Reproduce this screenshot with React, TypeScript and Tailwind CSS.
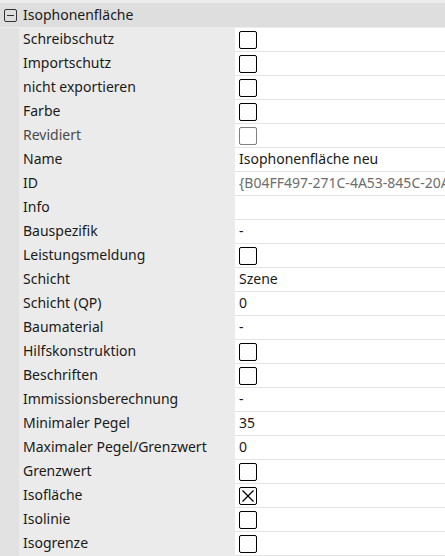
import React from 'react';

type Row = {
  label: string;
  kind: 'check' | 'text';
  value?: string;
  checked?: boolean;
  disabled?: boolean;
  muted?: boolean;
};

const rows: Row[] = [
  { label: 'Schreibschutz', kind: 'check' },
  { label: 'Importschutz', kind: 'check' },
  { label: 'nicht exportieren', kind: 'check' },
  { label: 'Farbe', kind: 'check' },
  { label: 'Revidiert', kind: 'check', disabled: true },
  { label: 'Name', kind: 'text', value: 'Isophonenfläche neu' },
  { label: 'ID', kind: 'text', value: '{B04FF497-271C-4A53-845C-20A1D3C0E9F1}', muted: true },
  { label: 'Info', kind: 'text', value: '' },
  { label: 'Bauspezifik', kind: 'text', value: '-' },
  { label: 'Leistungsmeldung', kind: 'check' },
  { label: 'Schicht', kind: 'text', value: 'Szene' },
  { label: 'Schicht (QP)', kind: 'text', value: '0' },
  { label: 'Baumaterial', kind: 'text', value: '-' },
  { label: 'Hilfskonstruktion', kind: 'check' },
  { label: 'Beschriften', kind: 'check' },
  { label: 'Immissionsberechnung', kind: 'text', value: '-' },
  { label: 'Minimaler Pegel', kind: 'text', value: '35' },
  { label: 'Maximaler Pegel/Grenzwert', kind: 'text', value: '0' },
  { label: 'Grenzwert', kind: 'check' },
  { label: 'Isofläche', kind: 'check', checked: true },
  { label: 'Isolinie', kind: 'check' },
  { label: 'Isogrenze', kind: 'check' },
];

function CheckBox({ checked, disabled }: { checked?: boolean; disabled?: boolean }) {
  return (
    <div
      className={`w-[18px] h-[18px] rounded-[2px] border bg-white flex items-center justify-center ${
        disabled ? 'border-[#808080]' : 'border-[#000]'
      }`}
    >
      {checked && (
        <svg width="14" height="14" viewBox="0 0 14 14">
          <path d="M1.5 1.5 L12.5 12.5 M12.5 1.5 L1.5 12.5" stroke="#000" strokeWidth="1.3" />
        </svg>
      )}
    </div>
  );
}

export default function App() {
  return (
    <div
      className="w-[445px] h-[556px] overflow-hidden bg-[#ececec] text-[14px] text-[#1a1a1a]"
      style={{ fontFamily: '"Noto Sans", "Open Sans", sans-serif' }}
    >
      <div className="h-[3px] bg-[#ececec]" />
      {/* Category header */}
      <div className="h-[24px] bg-[#dedede] flex items-center">
        <div className="w-[19px] shrink-0 flex justify-center pl-[2px]">
          <div className="w-[13px] h-[13px] border border-[#333] rounded-[2px] flex items-center justify-center">
            <div className="w-[7px] h-[1px] bg-[#333]" />
          </div>
        </div>
        <span className="pl-[4px] pb-[1px] leading-none">Isophonenfläche</span>
      </div>
      <div className="h-[1px] bg-[#ececec]" />
      {/* Rows */}
      <div className="flex">
        <div className="w-[19px] shrink-0 bg-[#e2e2e2]" />
        <div className="flex-1 min-w-0 flex flex-col">
          {rows.map((r) => (
            <div key={r.label} className="h-[24px] flex">
              <div
                className={`w-[216px] shrink-0 bg-[#ebebeb] pl-[4px] pb-[3px] flex items-center whitespace-nowrap ${
                  r.disabled ? 'text-[#4a4a4a]' : ''
                }`}
              >
                {r.label}
              </div>
              <div className="flex-1 min-w-0 bg-white border-b border-[#e4e4e4] pl-[4px] flex items-center whitespace-nowrap overflow-hidden">
                {r.kind === 'check' ? (
                  <CheckBox checked={r.checked} disabled={r.disabled} />
                ) : (
                  <span className={`pb-[2px] ${r.muted ? 'text-[#6d6d6d]' : ''}`}>{r.value}</span>
                )}
              </div>
            </div>
          ))}
        </div>
      </div>
    </div>
  );
}
